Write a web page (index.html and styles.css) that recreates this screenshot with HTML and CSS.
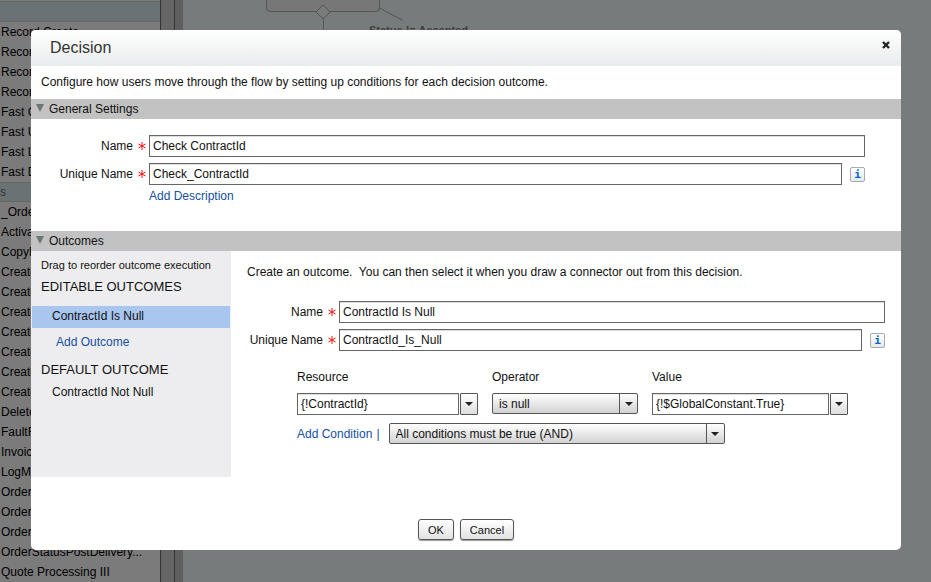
FILE: index.html
```html
<!DOCTYPE html>
<html lang="en">
<head>
    <meta charset="UTF-8">
    <meta name="viewport" content="width=device-width, initial-scale=1.0">
    <title>Decision</title>
    <link rel="stylesheet" href="styles.css">
</head>
<body>
    <!-- flow designer behind the dialog -->
    <div class="designer">
        <div class="palette">
            <div class="palette-head"></div>
            <ul>
                <li>Record Create</li>
                <li>Record Update</li>
                <li>Record Lookup</li>
                <li>Record Delete</li>
                <li>Fast Create</li>
                <li>Fast Update</li>
                <li>Fast Lookup</li>
                <li>Fast Delete</li>
            </ul>
            <div class="palette-head">s</div>
            <ul>
                <li>_Order</li>
                <li>Activate</li>
                <li>CopyFields</li>
                <li>Create</li>
                <li>Create</li>
                <li>Create</li>
                <li>Create</li>
                <li>Create</li>
                <li>Create</li>
                <li>Create</li>
                <li>Delete</li>
                <li>FaultFlow</li>
                <li>Invoice</li>
                <li>LogMessage</li>
                <li>Order</li>
                <li>Order</li>
                <li>Order</li>
                <li>OrderStatusPostDelivery...</li>
                <li>Quote Processing III</li>
            </ul>
        </div>
        <div class="scrollbar"></div>
        <div class="splitter"></div>
        <div class="canvas">
            <svg class="flow" width="320" height="40" viewBox="0 0 320 40">
                <path d="M83.500 -5V8q0 3.500 4 3.500H192.500q4 0 4-3.500V-5z" fill="#777" stroke="#545656"/>
                <path d="M196.500 8L220 20.500M140.500 18V40" fill="none" stroke="#545656"/>
                <path d="M140 5L147 12L140 19L133 12z" fill="#777b7b" stroke="#545656"/>
            </svg>
            <span class="flow-label">Status != Accepted</span>
        </div>
    </div>

    <div class="overlay">
        <div class="dialog" role="dialog" aria-labelledby="title">
            <div class="dialog-header">
                <h1 id="title">Decision</h1>
                <button type="button" class="close" aria-label="Close">
                    <svg width="8" height="8" viewBox="0 0 8 8"><path d="M1 1L7 7M7 1L1 7" stroke="#222" stroke-width="2.400"/></svg>
                </button>
            </div>
            <p class="intro">Configure how users move through the flow by setting up conditions for each decision outcome.</p>

            <button type="button" class="section-bar"><svg width="8" height="8" viewBox="0 0 8 8"><path d="M0 0H8L4 8z" fill="#6b7675"/></svg>General Settings</button>
            <div class="general">
                <div class="row">
                    <label for="name">Name</label>
                    <svg class="req" width="8" height="8" viewBox="0 0 8 8"><path d="M4 0V8M0.500 2L7.500 6M7.500 2L0.500 6" stroke="#f11"/></svg>
                    <input type="text" id="name" value="Check ContractId">
                </div>
                <div class="row">
                    <label for="unique">Unique Name</label>
                    <svg class="req" width="8" height="8" viewBox="0 0 8 8"><path d="M4 0V8M0.500 2L7.500 6M7.500 2L0.500 6" stroke="#f11"/></svg>
                    <input type="text" id="unique" value="Check_ContractId">
                    <button type="button" class="info">i</button>
                </div>
                <a href="#" class="add-description">Add Description</a>
            </div>

            <button type="button" class="section-bar"><svg width="8" height="8" viewBox="0 0 8 8"><path d="M0 0H8L4 8z" fill="#6b7675"/></svg>Outcomes</button>
            <div class="outcomes">
                <div class="outcome-list">
                    <p class="hint">Drag to reorder outcome execution</p>
                    <h2>EDITABLE OUTCOMES</h2>
                    <div class="outcome selected">ContractId Is Null</div>
                    <a href="#" class="add-outcome">Add Outcome</a>
                    <h2>DEFAULT OUTCOME</h2>
                    <div class="outcome">ContractId Not Null</div>
                </div>
                <div class="outcome-form">
                    <p class="create">Create an outcome.&nbsp; You can then select it when you draw a connector out from this decision.</p>
                    <div class="row">
                        <label for="oname">Name</label>
                        <svg class="req" width="8" height="8" viewBox="0 0 8 8"><path d="M4 0V8M0.500 2L7.500 6M7.500 2L0.500 6" stroke="#f11"/></svg>
                        <input type="text" id="oname" value="ContractId Is Null">
                    </div>
                    <div class="row">
                        <label for="ounique">Unique Name</label>
                        <svg class="req" width="8" height="8" viewBox="0 0 8 8"><path d="M4 0V8M0.500 2L7.500 6M7.500 2L0.500 6" stroke="#f11"/></svg>
                        <input type="text" id="ounique" value="ContractId_Is_Null">
                        <button type="button" class="info">i</button>
                    </div>
                    <div class="conditions">
                        <div class="field resource">
                            <label for="resource">Resource</label>
                            <div class="combo">
                                <input type="text" id="resource" value="{!ContractId}">
                                <button type="button" aria-label="Choose resource"><svg width="8" height="4" viewBox="0 0 8 4"><path d="M0 0H8L4 4z" fill="#222"/></svg></button>
                            </div>
                        </div>
                        <div class="field operator">
                            <label for="operator">Operator</label>
                            <div class="drop">
                                <select id="operator"><option>is null</option></select>
                                <span class="arrow"><svg width="8" height="4" viewBox="0 0 8 4"><path d="M0 0H8L4 4z" fill="#222"/></svg></span>
                            </div>
                        </div>
                        <div class="field value">
                            <label for="value">Value</label>
                            <div class="combo">
                                <input type="text" id="value" value="{!$GlobalConstant.True}">
                                <button type="button" aria-label="Choose value"><svg width="8" height="4" viewBox="0 0 8 4"><path d="M0 0H8L4 4z" fill="#222"/></svg></button>
                            </div>
                        </div>
                    </div>
                    <div class="logic">
                        <a href="#">Add Condition</a>
                        <span class="bar">|</span>
                        <div class="drop">
                            <select aria-label="Condition logic"><option>All conditions must be true (AND)</option></select>
                            <span class="arrow"><svg width="8" height="4" viewBox="0 0 8 4"><path d="M0 0H8L4 4z" fill="#222"/></svg></span>
                        </div>
                    </div>
                </div>
            </div>

            <div class="buttons">
                <button type="button">OK</button>
                <button type="button">Cancel</button>
            </div>
        </div>
    </div>
</body>
</html>
```

FILE: styles.css
```css
* {
    box-sizing: border-box;
}
body {
    margin: 0;
    height: 100vh;
    overflow: hidden;
    position: relative;
    font-family: "Liberation Sans", Arial, sans-serif;
    font-size: 12px;
    line-height: 20px;
    color: #111;
}
h1, h2, p, ul {
    margin: 0;
    padding: 0;
    font-weight: normal;
}
input, select, button {
    font: inherit;
    color: inherit;
}
a {
    color: #15509f;
    text-decoration: none;
}

/* designer */
.designer {
    display: flex;
    height: 100%;
    overflow: hidden;
    background: #777b7b;
}
.palette {
    width: 160px;
    padding-top: 1px;
    background: #7b7b7b;
    color: #000;
}
.palette ul {
    list-style: none;
}
.palette li {
    height: 20px;
    padding-left: 1px;
    white-space: nowrap;
}
.palette-head {
    height: 21px;
    background: #6b7276;
    border-top: 1px solid #666;
    border-bottom: 1px solid #666;
    color: #333;
    line-height: 18px;
}
.palette ul + .palette-head {
    height: 20px;
}
.scrollbar {
    width: 15px;
    background: #656565;
    border-left: 1px solid #333;
    border-right: 1px solid #333;
}
.splitter {
    width: 8px;
    background: #5f5f5f;
}
.canvas {
    flex: 1;
    position: relative;
    background: #777b7b;
}
.flow {
    position: absolute;
    left: 0;
    top: 0;
}
.flow-label {
    position: absolute;
    left: 186px;
    top: 20px;
    font-size: 11px;
    font-weight: bold;
    color: #3d3f3f;
}

/* dialog */
.overlay {
    position: absolute;
    inset: 0;
    padding: 30px 30px 32px 31px;
}
.dialog {
    background: #fff;
    border-radius: 5px;
    overflow: hidden;
}
.dialog-header {
    display: flex;
    justify-content: space-between;
    height: 36px;
    padding: 0 10px 0 19px;
    background: linear-gradient(#fff, #e8ecec);
}
.dialog-header h1 {
    font-size: 16px;
    line-height: 36px;
    color: #333;
}
.close {
    display: flex;
    align-self: center;
    padding: 0 1px 6px;
    border: 0;
    background: none;
}
.intro {
    padding: 6px 10px 7px;
}
.section-bar {
    display: flex;
    gap: 5px;
    width: 100%;
    height: 20px;
    padding: 0 5px;
    border: 0;
    background: #c2c2c2;
    line-height: 20px;
}
.section-bar svg {
    margin-top: 5px;
}
.general {
    padding: 16px 36px 25px 0;
}
.row {
    display: flex;
    align-items: center;
    margin-bottom: 6px;
}
.row label {
    width: 102px;
    text-align: right;
}
.row .req {
    margin: 0 3px 0 5px;
}
.row input {
    flex: 1;
}
input {
    min-width: 0;
    height: 22px;
    padding: 0 3px;
    border: 1px solid #666;
    border-radius: 0;
    background: #fff;
    box-shadow: inset 0 1px #ddd;
}
.info {
    width: 15px;
    height: 15px;
    margin-left: 8px;
    padding: 0;
    border: 1px solid #aaa;
    border-radius: 2px;
    background: linear-gradient(#fff, #e4e8ee);
    font-family: "DejaVu Sans Mono", monospace;
    font-size: 11px;
    font-weight: bold;
    line-height: 13px;
    color: #0068c8;
}
.add-description {
    display: block;
    width: max-content;
    margin: -5px 0 0 118px;
}

/* outcomes */
.outcomes {
    display: flex;
    min-height: 226px;
}
.outcome-list {
    width: 200px;
    padding: 4px 1px;
    background: #ededef;
}
.outcome-list .hint {
    padding-left: 9px;
    font-size: 11px;
}
.outcome-list h2 {
    padding-left: 9px;
    font-size: 13px;
    line-height: 24px;
}
.outcome {
    height: 22px;
    padding-left: 20px;
    line-height: 20px;
}
.selected {
    margin-top: 7px;
    background: #a9c6ef;
}
.add-outcome {
    display: block;
    padding: 4px 24px 6px;
}
.outcome-form {
    flex: 1;
    padding: 11px 16px 0;
}
.outcome-form .create {
    margin-bottom: 19px;
}
.outcome-form .row label {
    width: 76px;
    white-space: nowrap;
}
.conditions {
    display: flex;
    gap: 14px;
    padding: 10px 0 0 50px;
}
.field label {
    display: block;
    margin-bottom: 6px;
}
.resource {
    width: 181px;
}
.operator {
    width: 146px;
}
.value {
    width: 196px;
}
.combo {
    display: flex;
    gap: 1px;
}
.combo input {
    flex: 1;
}
.combo button {
    display: flex;
    align-items: center;
    justify-content: center;
    width: 18px;
    height: 22px;
    padding: 0;
    border: 1px solid #555;
    border-radius: 1px;
    background: linear-gradient(#fff, #ddd);
}
.drop {
    position: relative;
    height: 21px;
}
.drop select {
    display: block;
    appearance: none;
    width: 100%;
    height: 21px;
    padding: 0 6px;
    border: 1px solid #555;
    border-radius: 2px;
    background: linear-gradient(#fff, #d2d2d2);
}
.arrow {
    position: absolute;
    top: 1px;
    bottom: 1px;
    right: 1px;
    width: 18px;
    display: flex;
    align-items: center;
    justify-content: center;
    border-left: 1px solid #555;
    pointer-events: none;
}
.logic {
    display: flex;
    align-items: center;
    padding: 8px 0 0 50px;
}
.logic .bar {
    margin: 0 9px 0 4px;
    color: #15509f;
}
.logic .drop {
    width: 336px;
}
.buttons {
    display: flex;
    justify-content: center;
    gap: 6px;
    padding: 42px 0 10px;
}
.buttons button {
    height: 21px;
    padding: 0 9px;
    border: 1px solid #555;
    border-radius: 3px;
    background: linear-gradient(#fff, #e2e2e2);
    box-shadow: 0 1px 1px #999;
    font-size: 11px;
    line-height: 18px;
}
```
